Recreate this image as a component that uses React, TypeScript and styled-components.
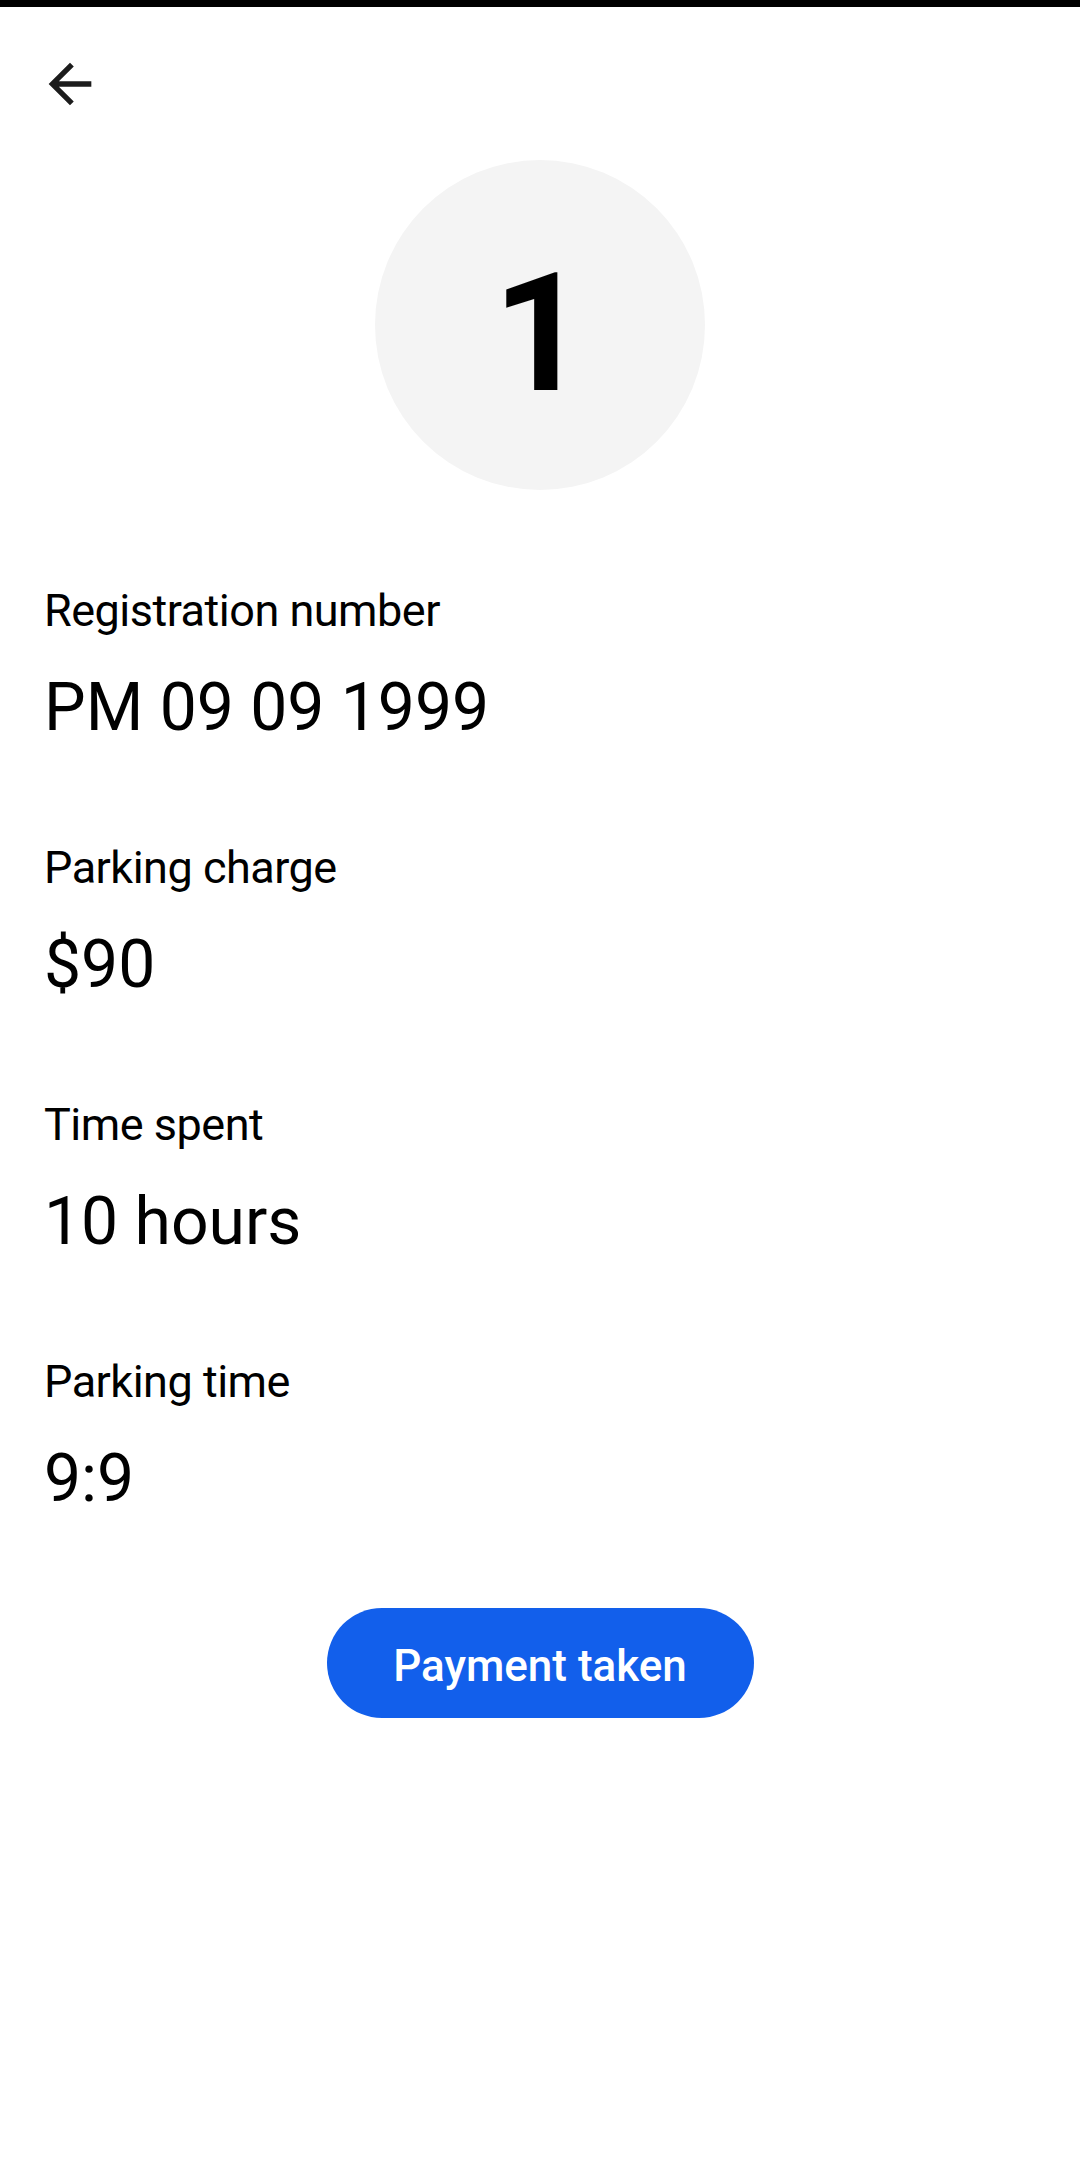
import React from 'react';
import styled, { createGlobalStyle } from 'styled-components';

const GlobalStyle = createGlobalStyle`
  html, body {
    margin: 0;
    padding: 0;
    background: #ffffff;
  }
  body {
    font-family: Roboto, "Noto Sans", "Liberation Sans", sans-serif;
    color: #000000;
  }
`;

const Screen = styled.div`
  width: 1080px;
  min-height: 2164px;
  display: flex;
  flex-direction: column;
  background: #ffffff;
`;

const StatusStrip = styled.div`
  height: 7px;
  background: #000000;
`;

const Header = styled.div`
  height: 153px;
  display: flex;
  align-items: center;
  padding-left: 37px;
`;

const BackButton = styled.button`
  width: 66px;
  height: 66px;
  padding: 0;
  border: none;
  background: transparent;
  display: flex;
  align-items: center;
  justify-content: center;
  cursor: pointer;

  svg {
    width: 64px;
    height: 64px;
    fill: #1c1c1c;
  }
`;

const Badge = styled.div`
  align-self: center;
  box-sizing: border-box;
  width: 330px;
  height: 330px;
  padding-top: 16px;
  border-radius: 50%;
  background: #f4f4f4;
  display: flex;
  align-items: center;
  justify-content: center;
  font-size: 165px;
  font-weight: 700;
  line-height: 1;
  margin-bottom: 93px;
`;

const Details = styled.div`
  display: flex;
  flex-direction: column;
  gap: 93px;
  padding: 0 44px;
`;

const Field = styled.div`
  display: flex;
  flex-direction: column;
  gap: 30px;
`;

const Label = styled.span`
  font-size: 45px;
  letter-spacing: -0.5px;
  line-height: 56px;
`;

const Value = styled.span`
  font-size: 66px;
  line-height: 78px;
`;

const Actions = styled.div`
  display: flex;
  justify-content: center;
  margin-top: 90px;
`;

const PrimaryButton = styled.button`
  width: 427px;
  height: 110px;
  padding: 6px 0 0;
  border: none;
  border-radius: 55px;
  background: #125feb;
  color: #ffffff;
  font-family: Roboto, "Noto Sans", "Liberation Sans", sans-serif;
  font-size: 44px;
  font-weight: 500;
  cursor: pointer;
`;

const fields = [
  { label: 'Registration number', value: 'PM 09 09 1999' },
  { label: 'Parking charge', value: '$90' },
  { label: 'Time spent', value: '10 hours' },
  { label: 'Parking time', value: '9:9' },
];

const App: React.FC = () => {
  return (
    <>
      <GlobalStyle />
      <Screen>
        <StatusStrip />
        <Header>
          <BackButton aria-label="Back">
            <svg viewBox="0 0 24 24">
              <path d="M20 11H7.83l5.59-5.59L12 4l-8 8 8 8 1.41-1.41L7.83 13H20v-2z" />
            </svg>
          </BackButton>
        </Header>
        <Badge>1</Badge>
        <Details>
          {fields.map((f) => (
            <Field key={f.label}>
              <Label>{f.label}</Label>
              <Value>{f.value}</Value>
            </Field>
          ))}
        </Details>
        <Actions>
          <PrimaryButton>Payment taken</PrimaryButton>
        </Actions>
      </Screen>
    </>
  );
};

export default App;
